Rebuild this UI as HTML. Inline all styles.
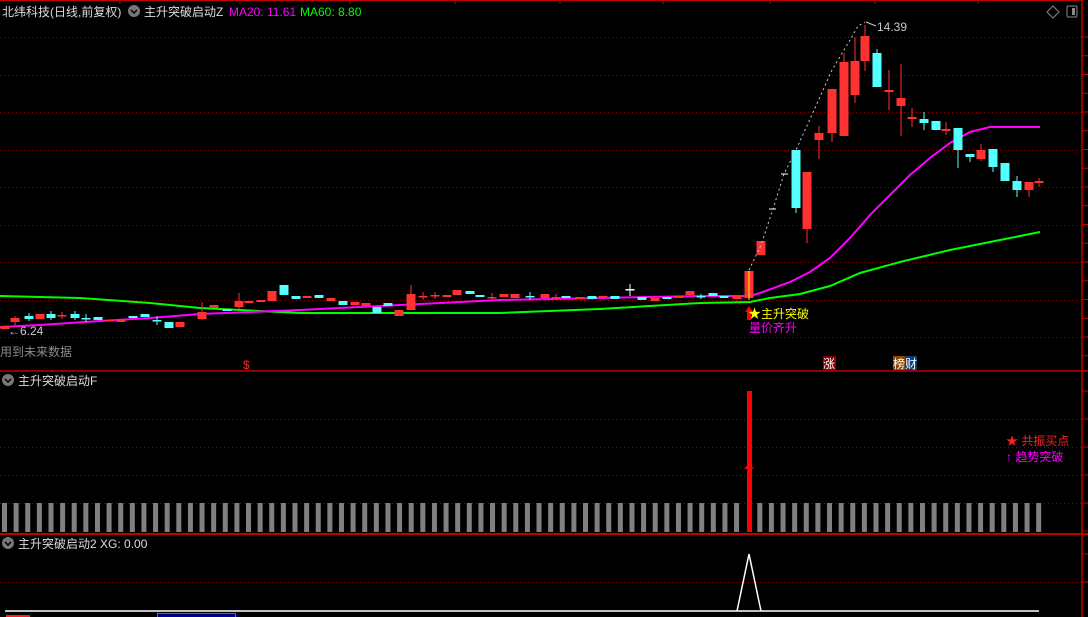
<!DOCTYPE html><html><head><meta charset="utf-8"><style>
body{margin:0;background:#000;width:1088px;height:617px;overflow:hidden;font-family:"Liberation Sans","Noto Sans CJK SC",sans-serif}
svg{display:block}
</style></head><body>
<svg id="s" width="1088" height="617" xmlns="http://www.w3.org/2000/svg" font-family="Liberation Sans, Noto Sans CJK SC, sans-serif"></svg>
<script>
var s=document.getElementById('s'),h='';
function L(x1,y1,x2,y2,c,w,d){h+='<line x1="'+x1+'" y1="'+y1+'" x2="'+x2+'" y2="'+y2+'" stroke="'+c+'" stroke-width="'+(w||1)+'"'+(d?' stroke-dasharray="'+d+'"':'')+'/>';}
function R(x,y,w,hh,c){h+='<rect x="'+x+'" y="'+y+'" width="'+w+'" height="'+hh+'" fill="'+c+'"/>';}
function T(x,y,t,c,fs){h+='<text x="'+x+'" y="'+y+'" fill="'+c+'" font-size="'+(fs||12)+'">'+t+'</text>';}
function P(pts,c,w){h+='<polyline fill="none" stroke="'+c+'" stroke-width="'+w+'" points="'+pts+'"/>';}
// grids
[37,75,112,150,187,225,262,300,337].forEach(function(y){L(0,y+.5,1081,y+.5,'#8a0000',1,'1 3');});
[419,447,475,503].forEach(function(y){L(0,y+.5,1081,y+.5,'#8a0000',1,'1 3');});
L(0,582.5,1081,582.5,'#8a0000',1,'1 3');
// frame
L(0,371,1088,371,'#c00000',1.5);L(0,534,1088,534,'#c00000',2);
L(1082,0,1082,617,'#c00000',1.5);L(0,0.5,1082,0.5,'#c00000',1);
for(var y=37;y<371;y+=18.75)L(1082,y,1088,y,'#c00000',1);
for(var y=391;y<534;y+=28)L(1082,y,1088,y,'#c00000',1);
L(1082,554,1088,554,'#c00000',1);L(1082,582,1088,582,'#c00000',1);
[120,240,350,455,560,663,770,875,978].forEach(function(x){L(x,0,x,4,'#c00000',1)});
// MA lines
P('0,296 80,298 150,303 200,308 300,313 500,313 600,309 700,303 750,302 770,298 800,294 830,286 860,273 900,262 950,250 1000,240 1040,232','#00ff00',2);
P('0,327 40,325 100,321 150,318 200,314 250,312 300,310 400,305 500,300 600,298 700,296 750,296 760,293 790,282 810,272 830,258 850,238 870,215 890,195 910,175 930,158 950,143 970,132 990,127 1040,127','#ff00ff',2);
// candles [x,top,bot,color,wickTop,wickBot]
var C=[[5,326,329,'r'],[15,318,322,'r',316,325],[29,316,319,'c',313,321],[40,314,319,'r'],[51,314,318,'c',311,320],[62,315,316,'r',312,319],[75,314,318,'c',311,320],[86,318,319,'c',314,322],[98,317,320,'c'],[109,320,321,'r'],[121,319,322,'r'],[133,316,318,'c'],[145,314,317,'c'],[157,320,321,'c',316,325],[169,322,328,'c'],[180,322,327,'r'],[202,312,319,'r',302,320],[214,305,308,'r'],[227,309,311,'c'],[239,301,307,'r',293,309],[249,301,303,'r'],[261,300,302,'r'],[272,291,301,'r'],[284,285,295,'c'],[296,296,299,'c'],[307,296,298,'r'],[319,295,298,'c'],[331,298,301,'r'],[343,301,305,'c'],[355,302,305,'r'],[366,303,306,'r'],[377,307,313,'c'],[388,303,306,'c'],[399,310,316,'r'],[411,294,310,'r',285,310],[423,296,297,'r',292,300],[435,295,296,'r',292,299],[447,295,297,'r'],[457,290,295,'r'],[470,291,294,'c'],[480,295,297,'c'],[492,297,298,'r',293,300],[504,294,297,'r'],[515,294,298,'r'],[530,296,297,'c',292,300],[545,294,298,'r'],[556,297,298,'r',294,300],[566,296,298,'c'],[580,297,299,'r'],[592,296,299,'c'],[603,296,298,'r'],[615,296,299,'c'],[630,289,290,'w',284,296],[642,297,300,'c'],[655,298,301,'r'],[667,297,299,'c'],[679,296,298,'r'],[690,291,295,'r'],[701,296,297,'c',294,299],[713,293,296,'c'],[724,296,298,'c'],[737,296,299,'r'],[749,271,298,'r',271,300],[761,241,255,'r'],[796,150,208,'c',150,213],[807,172,229,'r',172,243],[819,133,140,'r',126,159],[832,89,133,'r',89,142],[844,62,136,'r',53,136],[855,61,95,'r',37,103],[865,36,61,'r',25,71],[877,53,87,'c',49,87],[889,90,92,'r',70,110],[901,98,106,'r',64,136],[912,117,119,'r',108,127],[924,119,123,'c',112,130],[936,121,130,'c'],[946,129,131,'r',122,135],[958,128,150,'c',128,168],[970,154,157,'c',154,162],[981,150,159,'r',144,161],[993,149,167,'c',149,172],[1005,163,181,'c'],[1017,181,190,'c',176,197],[1029,182,190,'r',182,197],[1039,181,183,'r',178,187]];
var col={r:'#ff3232',c:'#54ffff',w:'#ffffff'};
C.forEach(function(k){var c=col[k[3]];if(k[4]!==undefined)L(k[0],k[4],k[0],k[5],c,1);R(k[0]-4.5,k[1],9,Math.max(k[2]-k[1],1.5),c);});
L(749,271,749,300,'#ffff00',1);
// zig dotted
P('749,270 761,245 773,209 784,174 796,150 815,108 832,70 850,40 858,26 865,22','#cccccc',1);
h=h.replace(/stroke="#cccccc" stroke-width="1" points/,'stroke="#cccccc" stroke-width="1" stroke-dasharray="2 3" points');
L(769,209,776,209,'#fff',1);L(781,174,788,174,'#fff',1);
T(877,31,'14.39','#c8c8c8',12);L(866,22,876,26,'#c8c8c8',1);
T(8,335,'←6.24','#c8c8c8',12);
T(0,356,'用到未来数据','#8c8c8c',12);
T(243,369,'$','#ff2020',12);
R(823,356,13,14,'#8b0000');T(823,368,'涨','#fff',12);
R(893,356,12,14,'#8b4500');R(905,356,12,14,'#0a3c78');T(893,368,'榜财','#fff',12);
// annotations
h+='<polygon points="749,306 745,312 747,312 747,320 751,320 751,312 753,312" fill="#ff0000"/>';
T(748,318,'★','#ffff00',13);T(761,318,'主升突破','#ffff00',12);
T(749,332,'量价齐升','#ff00ff',12);
// header
T(2,16,'北纬科技(日线,前复权)','#dcdcdc',12);
h+='<circle cx="134" cy="11" r="6" fill="#777"/><path d="M131 10 L134 13 L137 10" stroke="#000" stroke-width="1.5" fill="none"/>';
T(144,16,'主升突破启动Z','#dcdcdc',12);T(229,16,'MA20: 11.61','#ff00ff',12);T(300,16,'MA60: 8.80','#00ff00',12);
h+='<path d="M1053 6 L1059 12 L1053 18 L1047 12Z" fill="none" stroke="#888" stroke-width="1"/><rect x="1067" y="6" width="10" height="11" rx="1" fill="none" stroke="#888"/><rect x="1072" y="8" width="3" height="7" fill="#888"/>';
// panel 2
h+='<circle cx="8" cy="380" r="6" fill="#777"/><path d="M5 379 L8 382 L11 379" stroke="#000" stroke-width="1.5" fill="none"/>';
T(18,385,'主升突破启动F','#dcdcdc',12);
for(var i=0;i<90;i++){var x=2+i*11.62;if(x>1040)break;if(Math.abs(x-749)<6)continue;R(x,503,5,29,'#808080');}
R(747,391,5,141,'#ff0000');
h+='<polygon points="749,463 744,469 754,469" fill="#ff0000"/>';
T(1006,445,'★ 共振买点','#ff2020',12);T(1006,461,'↑ 趋势突破','#ff00ff',12);
// panel 3
h+='<circle cx="8" cy="543" r="6" fill="#777"/><path d="M5 542 L8 545 L11 542" stroke="#000" stroke-width="1.5" fill="none"/>';
T(18,548,'主升突破启动2 XG: 0.00','#dcdcdc',12);
L(5,611,1039,611,'#ffffff',1.5);P('737,611 749,554 761,611','#ffffff',1.5);
R(157,613,80,6,'#000080');h+='<rect x="157.5" y="613.5" width="78" height="6" fill="none" stroke="#4060ff"/>';
L(6,616,30,616,'#ff2020',2);
s.innerHTML=h;
</script>
</body></html>
